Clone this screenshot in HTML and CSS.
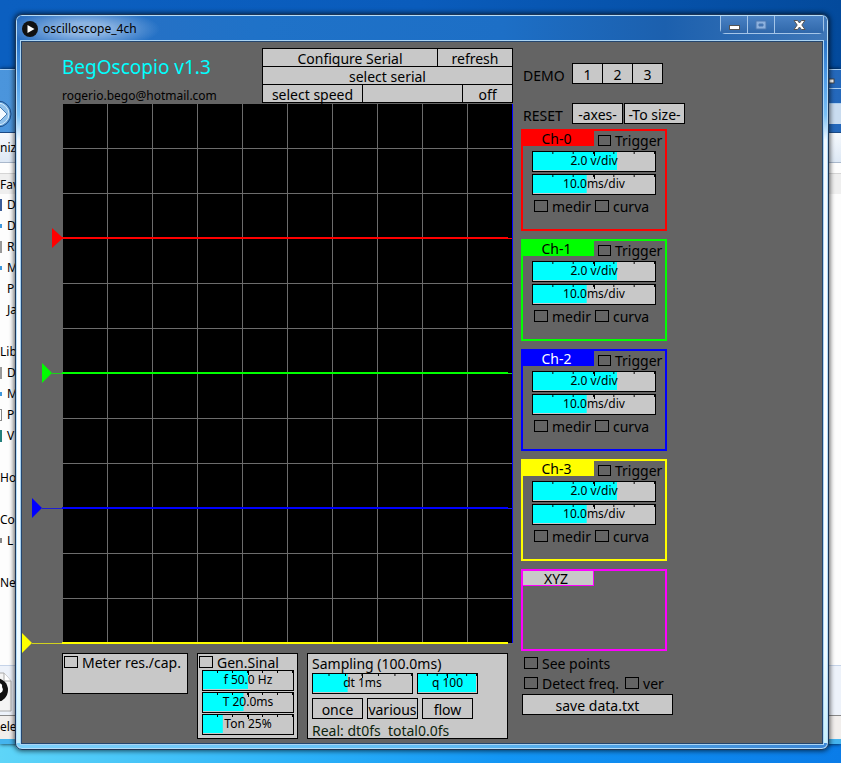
FILE: index.html
```html
<!DOCTYPE html>
<html lang="en">
<head>
<meta charset="utf-8">
<title>oscilloscope_4ch</title>
<link rel="stylesheet" href="styles.css">
</head>
<body>
<div class="desktop">
  <section class="explorer" aria-label="Explorer">
    <div class="explorer-title">
      <svg class="nav-arrow" width="12" height="30" viewBox="0 0 12 30"><circle cx="-2" cy="15" r="13" fill="#5f9fd8" stroke="#1d4f8c"/><circle cx="-2" cy="15" r="11" fill="#8fc0ea" stroke="#d8ecfb"/><path d="M-4 8l4 0 7 7-7 7h-4z" fill="#f4faff" stroke="#4a7fb5"/></svg>
      <svg class="explorer-min" width="12" height="55" viewBox="0 0 12 55"><path d="M0 18.500h12M0 33.500h12" stroke="#a9cdf0" fill="none"/><rect x="0" y="9" width="5" height="4" fill="#fff" stroke="#444"/><rect x="0" y="34" width="12" height="20" fill="#c9dcf0"/></svg>
    </div>
    <div class="explorer-bar">niz</div>
    <ul class="explorer-nav">
      <li class="group active">Fav</li>
      <li><i class="chip navy"></i>D</li>
      <li><i class="chip sky"></i>D</li>
      <li><i class="chip gray"></i>R</li>
      <li><i class="chip sky"></i>M</li>
      <li><i class="chip"></i>P</li>
      <li><i class="chip"></i>Ja</li>
      <li class="group"></li>
      <li class="group">Lib</li>
      <li><i class="chip gray"></i>D</li>
      <li><i class="chip sky"></i>M</li>
      <li><i class="chip page"></i>P</li>
      <li><i class="chip teal"></i>V</li>
      <li class="group"></li>
      <li class="group">Ho</li>
      <li class="group"></li>
      <li class="group">Cor</li>
      <li><i class="chip dot"></i>L</li>
      <li class="group"></li>
      <li class="group">Net</li>
    </ul>
    <div class="explorer-details">
      <svg width="12" height="40" viewBox="0 0 12 40"><path d="M-1 1H4l7 8v30H-1z" fill="#f4f4f4" stroke="#aaa"/><path d="M4 1v8h7" fill="#fff" stroke="#aaa"/><circle cx="-4" cy="18" r="12" fill="#111"/><path d="M-2 11q5 0 4 4q3 5-4 7z" fill="#fff"/></svg>
    </div>
    <div class="explorer-status">ele</div>
  </section>

  <main class="window">
    <header class="titlebar">
      <svg class="app-icon" width="16" height="16" viewBox="0 0 16 16"><circle cx="8" cy="8" r="8" fill="#111"/><path d="M5.500 4l7 4-7 4z" fill="#fff"/></svg>
      <span class="caption">oscilloscope_4ch</span>
      <div class="window-buttons">
        <button type="button" aria-label="Minimize"><svg width="13" height="12" viewBox="0 0 13 12"><rect x="1.500" y="6.500" width="10" height="4" fill="#fff" stroke="#555"/></svg></button>
        <button type="button" aria-label="Maximize"><svg width="12" height="12" viewBox="0 0 12 12"><path d="M1 2h10v8H1zM4 5v2h4V5z" fill="#8db1de" fill-rule="evenodd" stroke="#4c78b0"/></svg></button>
        <button type="button" class="close" aria-label="Close"><svg width="13" height="12" viewBox="0 0 13 12"><path d="M1 1.500h3.500l2 2.500 2-2.500H12L8.800 6l3.200 4.500H8.500l-2-2.500-2 2.500H1L4.200 6z" fill="#fff" stroke="#555"/></svg></button>
      </div>
    </header>

    <div class="app">
      <div class="scope-side">
        <div class="top">
          <div class="brand">
            <h1>BegOscopio v1.3</h1>
            <p>rogerio.bego@hotmail.com</p>
          </div>
          <div class="serial">
            <button type="button" class="s-config">Configure Serial</button>
            <button type="button" class="s-refresh">refresh</button>
            <button type="button" class="s-serial">select serial</button>
            <button type="button" class="s-speed">select speed</button>
            <span class="s-blank"></span>
            <button type="button" class="s-off">off</button>
          </div>
        </div>

        <svg class="scope" width="492" height="541" viewBox="0 0 492 541" role="img" aria-label="Scope display">
          <defs>
            <pattern id="grid" x="40" y="0" width="45" height="45" patternUnits="userSpaceOnUse"><path d="M.5 0v45M0 .5h45" stroke="#6c6c6c" fill="none"/></pattern>
          </defs>
          <rect x="41" y="1" width="450" height="540" fill="#000"/>
          <rect x="41" y="1" width="450" height="540" fill="url(#grid)"/>
          <path d="M490.500 1v539" stroke="#00f"/>
          <g fill="#f00" stroke="#f00"><path stroke="none" d="M30 125l11 10-11 10z"/><path d="M40 135.500h450"/><path stroke-width="2" d="M40 135h446"/></g>
          <g fill="#0f0" stroke="#0f0"><path stroke="none" d="M20 260l10 10-10 10z"/><path stroke-opacity=".7" d="M30 270.500h460"/><path stroke-width="2" d="M40 270h446"/></g>
          <g fill="#00f" stroke="#00f"><path stroke="none" d="M10 395l10 10-10 10z"/><path stroke-opacity=".7" d="M20 405.500h470"/><path stroke-width="2" d="M40 405h446"/></g>
          <g fill="#ff0" stroke="#ff0"><path stroke="none" d="M0 530l10 10-10 10z"/><path stroke-opacity=".7" d="M10 540.500h476"/><path stroke-width="2" d="M40 540h446"/></g>
        </svg>

        <div class="panels">
          <section class="panel meter">
            <label class="check"><input type="checkbox">Meter res./cap.</label>
          </section>
          <section class="panel gen">
            <label class="check"><input type="checkbox">Gen.Sinal</label>
            <div class="gen-sliders">
              <label class="slider" style="--fill:50%"><input type="range" value="50" aria-label="Frequency"><span>f 50.0 Hz</span></label>
              <label class="slider" style="--fill:45%"><input type="range" value="45" aria-label="Period"><span>T 20.0ms</span></label>
              <label class="slider" style="--fill:22%"><input type="range" value="25" aria-label="Duty"><span>Ton 25%</span></label>
            </div>
          </section>
          <section class="panel sampling">
            <h2>Sampling (100.0ms)</h2>
            <div class="row">
              <label class="slider dt" style="--fill:35%"><input type="range" value="35" aria-label="dt"><span>dt 1ms</span></label>
              <label class="slider q" style="--fill:99%"><input type="range" value="100" aria-label="q"><span>q 100</span></label>
            </div>
            <div class="row">
              <button type="button" class="btn">once</button>
              <button type="button" class="btn">various</button>
              <button type="button" class="btn">flow</button>
            </div>
            <p>Real: dt0fs&nbsp; total0.0fs</p>
          </section>
        </div>
      </div>

      <div class="controls">
        <div class="tools demo"><span>DEMO</span><button type="button" class="btn">1</button><button type="button" class="btn">2</button><button type="button" class="btn">3</button></div>
        <div class="tools reset"><span>RESET</span><button type="button" class="btn axes">-axes-</button><button type="button" class="btn size">-To size-</button></div>

        <section class="channel red">
          <div class="channel-head"><h2>Ch-0</h2><label class="check small"><input type="checkbox">Trigger</label></div>
          <label class="slider" style="--fill:69%"><input type="range" value="68" aria-label="Volts per division"><span>2.0 v/div</span></label>
          <label class="slider" style="--fill:44%"><input type="range" value="44" aria-label="Time per division"><span>10.0ms/div</span></label>
          <div class="checks"><label class="check"><input type="checkbox">medir</label><label class="check"><input type="checkbox">curva</label></div>
        </section>
        <section class="channel green">
          <div class="channel-head"><h2>Ch-1</h2><label class="check small"><input type="checkbox">Trigger</label></div>
          <label class="slider" style="--fill:69%"><input type="range" value="68" aria-label="Volts per division"><span>2.0 v/div</span></label>
          <label class="slider" style="--fill:44%"><input type="range" value="44" aria-label="Time per division"><span>10.0ms/div</span></label>
          <div class="checks"><label class="check"><input type="checkbox">medir</label><label class="check"><input type="checkbox">curva</label></div>
        </section>
        <section class="channel blue">
          <div class="channel-head"><h2>Ch-2</h2><label class="check small"><input type="checkbox">Trigger</label></div>
          <label class="slider" style="--fill:69%"><input type="range" value="68" aria-label="Volts per division"><span>2.0 v/div</span></label>
          <label class="slider" style="--fill:44%"><input type="range" value="44" aria-label="Time per division"><span>10.0ms/div</span></label>
          <div class="checks"><label class="check"><input type="checkbox">medir</label><label class="check"><input type="checkbox">curva</label></div>
        </section>
        <section class="channel yellow">
          <div class="channel-head"><h2>Ch-3</h2><label class="check small"><input type="checkbox">Trigger</label></div>
          <label class="slider" style="--fill:69%"><input type="range" value="68" aria-label="Volts per division"><span>2.0 v/div</span></label>
          <label class="slider" style="--fill:44%"><input type="range" value="44" aria-label="Time per division"><span>10.0ms/div</span></label>
          <div class="checks"><label class="check"><input type="checkbox">medir</label><label class="check"><input type="checkbox">curva</label></div>
        </section>
        <section class="channel xyz"><h2>XYZ</h2></section>

        <div class="options">
          <label class="check"><input type="checkbox">See points</label>
          <div class="option-row"><label class="check detect"><input type="checkbox">Detect freq.</label><label class="check"><input type="checkbox">ver</label></div>
        </div>
        <button type="button" class="btn save">save data.txt</button>
      </div>
    </div>
  </main>
</div>
</body>
</html>
```
FILE: styles.css
```css
* { box-sizing: border-box; }
body { margin: 0; font-family: "Noto Sans", sans-serif; font-size: 14px; color: #000; }
h1, h2, p, ul { margin: 0; padding: 0; font-weight: normal; }
button, input { margin: 0; font: inherit; color: inherit; }

.desktop {
  position: relative;
  min-height: 100vh;
  overflow: hidden;
  background:
    linear-gradient(90deg, #5ed5f8 0, #2cb2f8 35%, #1295f4 60%, #0a7ce8 100%) bottom / 100% 40px no-repeat,
    linear-gradient(90deg, #0b5fc0 0, #0a5cbc 50%, #034a9c 100%);
}

/* Window behind the main one */
.explorer {
  position: absolute;
  inset: 69px 0 19px;
  overflow: hidden;
  display: flex;
  flex-direction: column;
  background: #fdfdfd;
  border-top: 1px solid #a9cdf0;
  border-bottom: 5px solid #45b4ee;
  font: 12px/21px "Noto Sans", sans-serif;
  box-shadow: 0 0 4px #012;
}
.explorer-title { height: 63px; display: flex; justify-content: space-between; background: linear-gradient(90deg, #4b95dc, #2468bb); border-bottom: 1px solid #1a4a86; }
.nav-arrow { margin-top: 29px; }
.explorer-bar { height: 30px; padding-top: 4px; background: linear-gradient(#f5f9fd, #dde8f5); border-bottom: 1px solid #a9b8cc; }
.explorer-nav { flex: 1; padding-top: 10px; list-style: none; }
.explorer-nav li { display: flex; align-items: center; height: 21px; gap: 5px; }
.explorer-nav .active { background: #efefef; border-top: 1px solid #d5d5d5; }
.chip { width: 2px; height: 12px; }
.navy { background: #3b5c98; }
.sky { background: #3f97dc; height: 4px; }
.gray { background: #999; }
.teal { background: #23807c; }
.page { border: 1px solid #888; border-left: 0; }
.dot { background: #888; height: 5px; }
.explorer-details { height: 50px; padding-top: 6px; background: #edf2fa; border-top: 1px solid #c5d3e8; }
.explorer-status { height: 24px; background: #f1eeec; border-top: 1px solid #888; }

/* Main window */
.window {
  position: absolute;
  inset: 14px 12px 13px 15px;
  display: flex;
  flex-direction: column;
  padding: 0 5px 5px;
  border: 1px solid #1c3658;
  border-radius: 7px;
  background:
    linear-gradient(90deg, #7cd0fa, #62bdf4 50%, #3b86d6) bottom / 100% 6px no-repeat,
    linear-gradient(#2c73c8 0, #2a74c8 28px, #4a98e6 60px, #7ac0f5 100px, #f2f9ff 125px, #fdfeff 400px, #eefaff 640px, #c4effc 100%);
  box-shadow: inset 0 0 0 1px #b5dcf8, 0 0 5px 1px rgba(0, 0, 0, .65);
}
.titlebar {
  display: flex;
  align-items: center;
  height: 25px;
  margin: 1px -4px 0;
  padding-left: 5px;
  border-radius: 5px 5px 0 0;
  background: radial-gradient(ellipse 75px 20px at 68px 13px, #8db5e3 30%, rgba(141, 181, 227, 0)), linear-gradient(90deg, #2c70c2, #1f72c8 30%, #1d6fc6 60%, #1c60ae 80%, #3f77b8);
}
.caption { margin-left: 5px; font: 12px/16px "Noto Sans", sans-serif; }
.window-buttons { display: flex; align-self: flex-start; margin-left: auto; margin-right: 3px; border: 1px solid #a4c5e8; border-top: 0; border-radius: 0 0 5px 5px; }
.window-buttons button { width: 27px; height: 17px; padding: 0; display: grid; place-items: center; border: 0; border-right: 1px solid #a4c5e8; background: linear-gradient(#4a82c4, #2f67aa); }
.window-buttons .close { width: 48px; border-right: 0; }

.app { flex: 1; display: flex; gap: 7px; padding-top: 6px; background: #646464; border: 1px solid #24466e; box-shadow: 0 0 0 1px #a9d3f3; }
.scope-side { flex: none; }
.top { display: flex; justify-content: space-between; padding: 0 1px 0 40px; }
.brand { padding-top: 8px; }
.brand h1 { font-size: 19px; line-height: 22px; color: #0ff; }
.brand p { margin-top: 10px; font-size: 12px; line-height: 15px; }
.serial { display: grid; grid-template-columns: 100px 75px 25px 50px; grid-auto-rows: 18px; border-top: 1px solid #000; border-left: 1px solid #000; }
.serial > * { padding: 2px 0 0; line-height: 15px; background: #c8c8c8; border: 0 solid #000; border-width: 0 1px 1px 0; }
.s-config { grid-column: span 2; }
.s-refresh { grid-column: span 2; }
.s-serial { grid-column: span 4; }
.s-blank { grid-column: span 2; }
.scope { display: block; overflow: visible; }

.panels { display: flex; align-items: flex-start; gap: 9px; margin: 9px 0 0 40px; }
.panel { background: #c8c8c8; border: 1px solid #000; }
.meter { width: 126px; height: 41px; padding: 1px; }
.gen { width: 101px; height: 86px; padding: 1px; }
.gen-sliders { display: grid; gap: 1px; margin: 1px 2px 0 3px; }
.sampling { width: 201px; height: 86px; padding: 0 4px; }
.sampling h2 { font-size: 14px; line-height: 19px; }
.sampling .row { display: flex; gap: 4px; margin-bottom: 4px; }
.sampling .btn { width: 51px; }
.sampling p { line-height: 16px; color: #0c230c; }
.dt { width: 101px; }
.q { width: 61px; }

.btn { height: 21px; padding: 3px 0 0; line-height: 15px; white-space: nowrap; display: flex; justify-content: center; background: #c8c8c8; border: 1px solid #000; border-radius: 0; }

.check { display: flex; align-items: center; gap: 4px; height: 14px; white-space: nowrap; }
.check input { appearance: none; flex: none; width: 14px; height: 12px; border: 1px solid #000; }
.small input { width: 13px; height: 11px; }

.slider { position: relative; display: block; height: 21px; font-size: 12px; }
.slider input {
  appearance: none;
  display: block;
  width: 100%;
  height: 21px;
  border: 1px solid #000;
  background:
    linear-gradient(#000, #000) center top / 1px 4px no-repeat,
    linear-gradient(to left, #000 1px, transparent 1px) left top / calc(100% / 6) 2px repeat-x,
    linear-gradient(#0ff, #0ff) left top / var(--fill) 18px no-repeat,
    #c8c8c8;
}
.slider input::-webkit-slider-thumb { appearance: none; width: 1px; height: 1px; opacity: 0; }
.slider span { position: absolute; inset: 0; line-height: 19px; text-align: center; pointer-events: none; }

.controls { padding-top: 15px; }
.tools { display: flex; align-items: center; height: 21px; padding-left: 2px; }
.tools span { width: 49px; padding-top: 4px; }
.demo .btn { width: 31px; }
.demo .btn + .btn { border-left: 0; width: 30px; }
.reset { margin: 19px 0 5px; }
.axes { width: 51px; margin-right: 1px; }
.size { width: 61px; }

.channel { width: 146px; height: 102px; margin-bottom: 8px; border: 2px solid var(--c); }
.red { --c: #f00; }
.green { --c: #0f0; }
.blue { --c: #00f; }
.yellow { --c: #ff0; }
.xyz { --c: #f0f; height: 82px; margin-bottom: 5px; }
.channel h2 { width: 71px; height: 15px; padding-right: 4px; font-size: 14px; line-height: 16px; text-align: center; background: var(--c); }
.blue h2 { color: #fff; }
.xyz h2 { background: #c8c8c8; border: 1px solid #f0f; border-width: 0 1px 1px 0; }
.channel-head { display: flex; gap: 4px; height: 20px; }
.channel-head .check { height: 18px; }
.channel .slider { margin: 0 9px 2px; }
.checks { display: flex; gap: 4px; padding: 2px 0 0 11px; }

.options { padding-left: 3px; }
.option-row { display: flex; gap: 6px; margin-top: 6px; }
.save { width: 151px; margin: 4px 0 0 1px; }
```
